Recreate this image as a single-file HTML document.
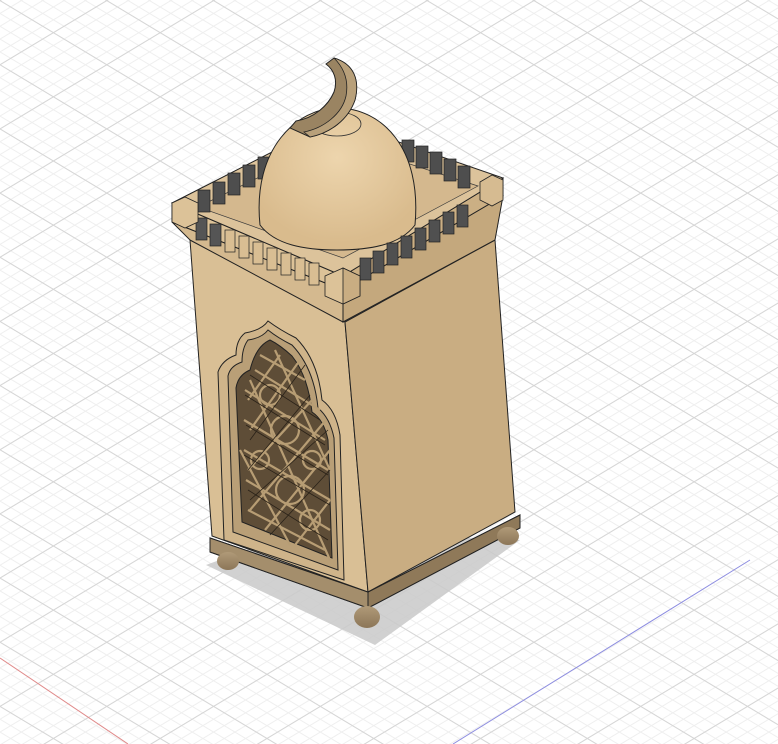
<!DOCTYPE html>
<html><head><meta charset="utf-8"><style>
html,body{margin:0;padding:0;background:#fff;}
svg{display:block;}
</style></head><body>
<svg width="778" height="744" viewBox="0 0 778 744" xmlns="http://www.w3.org/2000/svg">
<defs>
<pattern id="ga" width="400" height="11" patternUnits="userSpaceOnUse" patternTransform="rotate(31)">
<line x1="0" y1="0.5" x2="400" y2="0.5" stroke="#efefef" stroke-width="1"/>
</pattern>
<pattern id="gb" width="400" height="11" patternUnits="userSpaceOnUse" patternTransform="rotate(-31)">
<line x1="0" y1="0.5" x2="400" y2="0.5" stroke="#efefef" stroke-width="1"/>
</pattern>
<pattern id="gA" width="400" height="55" patternUnits="userSpaceOnUse" patternTransform="rotate(31)">
<line x1="0" y1="0.5" x2="400" y2="0.5" stroke="#d6d6d6" stroke-width="1"/>
</pattern>
<pattern id="gB" width="400" height="55" patternUnits="userSpaceOnUse" patternTransform="rotate(-31)">
<line x1="0" y1="0.5" x2="400" y2="0.5" stroke="#d6d6d6" stroke-width="1"/>
</pattern>
<radialGradient id="dome" cx="0.5" cy="0.35" r="0.6">
<stop offset="0" stop-color="#edd5ad"/><stop offset="1" stop-color="#d9bb8d"/>
</radialGradient>
<linearGradient id="foot" x1="0" y1="0" x2="0" y2="1">
<stop offset="0" stop-color="#b09a78"/><stop offset="1" stop-color="#8c7658"/>
</linearGradient>
</defs>
<rect width="778" height="744" fill="#fff"/>
<rect width="778" height="744" fill="url(#ga)"/>
<rect width="778" height="744" fill="url(#gb)"/>
<rect width="778" height="744" fill="url(#gA)"/>
<rect width="778" height="744" fill="url(#gB)"/>
<line x1="0" y1="658" x2="128" y2="744" stroke="#e08a8a" stroke-width="1"/>
<line x1="453" y1="744" x2="750" y2="560" stroke="#8c8ce0" stroke-width="1"/>

<polygon points="206,565 300,530 520,540 375,645" fill="#c9c9c9" opacity="0.85"/>

<polygon points="210,538 368,592 520,515 520,528 368,608 210,552" fill="#9c8565" stroke="#222" stroke-width="1"/>
<polygon points="210,538 368,592 368,608 210,552" fill="#a48e6c" stroke="#222" stroke-width="1"/>
<polygon points="368,592 520,515 520,528 368,608" fill="#8f7959" stroke="#222" stroke-width="1"/>
<ellipse cx="228" cy="561" rx="11" ry="9" fill="url(#foot)"/>
<ellipse cx="367" cy="617" rx="13" ry="11" fill="url(#foot)"/>
<ellipse cx="508" cy="536" rx="11" ry="9" fill="url(#foot)"/>

<polygon points="190,240 345,322 368,592 212,536" fill="#d9bf95" stroke="#222" stroke-width="1"/>
<polygon points="345,322 495,240 515,512 368,592" fill="#c9ad82" stroke="#222" stroke-width="1"/>

<path d="M268,321 Q262,330 245,333 Q236,340 236,355 Q222,360 218,372 L224,540 L344,580 L340,435 Q336,410 322,400 Q318,360 296,338 Q280,330 268,321 Z" fill="#cfb48a" stroke="#222" stroke-width="1"/>
<path d="M268,330 Q262,338 248,340 Q242,348 242,362 Q230,366 228,376 L233,532 L338,570 L334,438 Q330,418 318,408 Q314,368 292,345 Q278,338 268,330 Z" fill="#b99f77" stroke="#222" stroke-width="1"/>
<path d="M270,340 Q256,346 250,370 Q238,375 236,388 L242,522 L332,558 L328,440 Q324,420 312,412 Q308,376 292,356 Q280,345 270,340 Z" fill="#5e4d37" stroke="#222" stroke-width="1"/>
<g stroke="#b79d74" stroke-width="2.2" fill="none">
<path d="M245,390 L325,440 M244,420 L328,470 M244,450 L330,500 M246,480 L330,530 M248,510 L325,550 M255,370 L320,410 M260,355 L305,380"/>
<path d="M250,430 L300,360 M248,470 L312,400 M250,510 L326,420 M265,530 L330,450 M295,545 L330,500 M248,400 L280,355"/>
<path d="M250,380 L330,560 M275,350 L330,470 M240,450 L290,545"/>
<circle cx="285" cy="430" r="14"/><circle cx="290" cy="490" r="14"/><circle cx="270" cy="395" r="10"/><circle cx="310" cy="520" r="10"/><circle cx="260" cy="460" r="9"/><circle cx="312" cy="460" r="9"/>
</g>
<g stroke="#2a2218" stroke-width="0.8" fill="none">
<path d="M245,395 L325,445 M244,455 L330,505 M250,375 L320,420 M248,490 L328,540 M246,425 L328,475"/>
<path d="M250,440 L305,365 M250,500 L328,430 M270,535 L330,470 M248,470 L310,395"/>
</g>

<polygon points="172,222 343,290 343,322 190,240" fill="#d4b98f" stroke="#222" stroke-width="1"/>
<polygon points="343,290 503,196 495,240 343,322" fill="#c4a87d" stroke="#222" stroke-width="1"/>
<polygon points="172,203 343,276 343,290 172,222" fill="#dcc298" stroke="#222" stroke-width="1"/>
<polygon points="343,276 503,178 503,196 343,290" fill="#cbaf84" stroke="#222" stroke-width="1"/>
<polygon points="172,203 335,120 503,178 343,276" fill="#dcc39b" stroke="#222" stroke-width="1"/>
<polygon points="198,207 335,140 478,186 343,258" fill="#d4b88e" stroke="#3a3a3a" stroke-width="0.7"/>

<g fill="#4e4e4e" stroke="#222" stroke-width="0.7">
<rect x="198" y="190" width="12" height="22"/><rect x="213" y="182" width="12" height="22"/><rect x="228" y="173" width="12" height="22"/><rect x="243" y="165" width="12" height="22"/><rect x="258" y="157" width="12" height="22"/>
<rect x="402" y="140" width="12" height="22"/><rect x="416" y="146" width="12" height="22"/><rect x="430" y="152" width="12" height="22"/><rect x="444" y="159" width="12" height="22"/><rect x="458" y="166" width="12" height="22"/>
</g>

<path d="M260,225 C252,148 298,108 337,108 C382,108 422,148 415,225 C400,245 370,250 337,250 C305,250 275,245 260,225 Z" fill="url(#dome)" stroke="#222" stroke-width="1"/>
<ellipse cx="337" cy="124" rx="24" ry="12" fill="none" stroke="#333" stroke-width="0.8"/>
<!-- crescent -->
<path d="M326,64 L334,58 C354,64 360,80 355,100 C348,120 330,133 310,137 L290,128 L296,121 C314,118 328,106 334,92 C338,80 334,70 326,64 Z" fill="#9a8462" stroke="#222" stroke-width="1"/>
<path d="M334,58 C354,64 360,80 355,100 C348,120 330,133 310,137 L304,132 C324,128 342,114 346,96 C349,80 344,68 334,58 Z" fill="#b8a07a" stroke="#222" stroke-width="0.8"/>

<g stroke="#222" stroke-width="0.7">
<g fill="#555"><rect x="196" y="218" width="11" height="22"/><rect x="210" y="224" width="11" height="22"/></g>
<g fill="#d9be93"><rect x="225" y="230" width="10" height="22"/><rect x="239" y="236" width="10" height="22"/><rect x="253" y="242" width="10" height="22"/><rect x="267" y="248" width="10" height="22"/><rect x="281" y="253" width="10" height="22"/><rect x="295" y="258" width="10" height="22"/><rect x="309" y="263" width="10" height="22"/></g>
<g fill="#505050"><rect x="360" y="258" width="11" height="22"/><rect x="373" y="251" width="11" height="22"/><rect x="387" y="243" width="11" height="22"/><rect x="401" y="236" width="11" height="22"/><rect x="415" y="228" width="11" height="22"/><rect x="429" y="220" width="11" height="22"/><rect x="443" y="212" width="11" height="22"/><rect x="457" y="205" width="11" height="22"/></g>
</g>
<g stroke="#222" stroke-width="0.8">
<polygon points="172,203 185,197 198,203 198,222 185,228 172,222" fill="#dcc298"/>
<polygon points="325,276 343,268 360,276 360,296 343,304 325,296" fill="#dcc298"/>
<polygon points="343,268 360,276 360,296 343,304" fill="#c9ad82"/>
<polygon points="480,182 492,175 503,180 503,200 492,206 480,200" fill="#d6bb91"/>
</g>
</svg>
</body></html>
